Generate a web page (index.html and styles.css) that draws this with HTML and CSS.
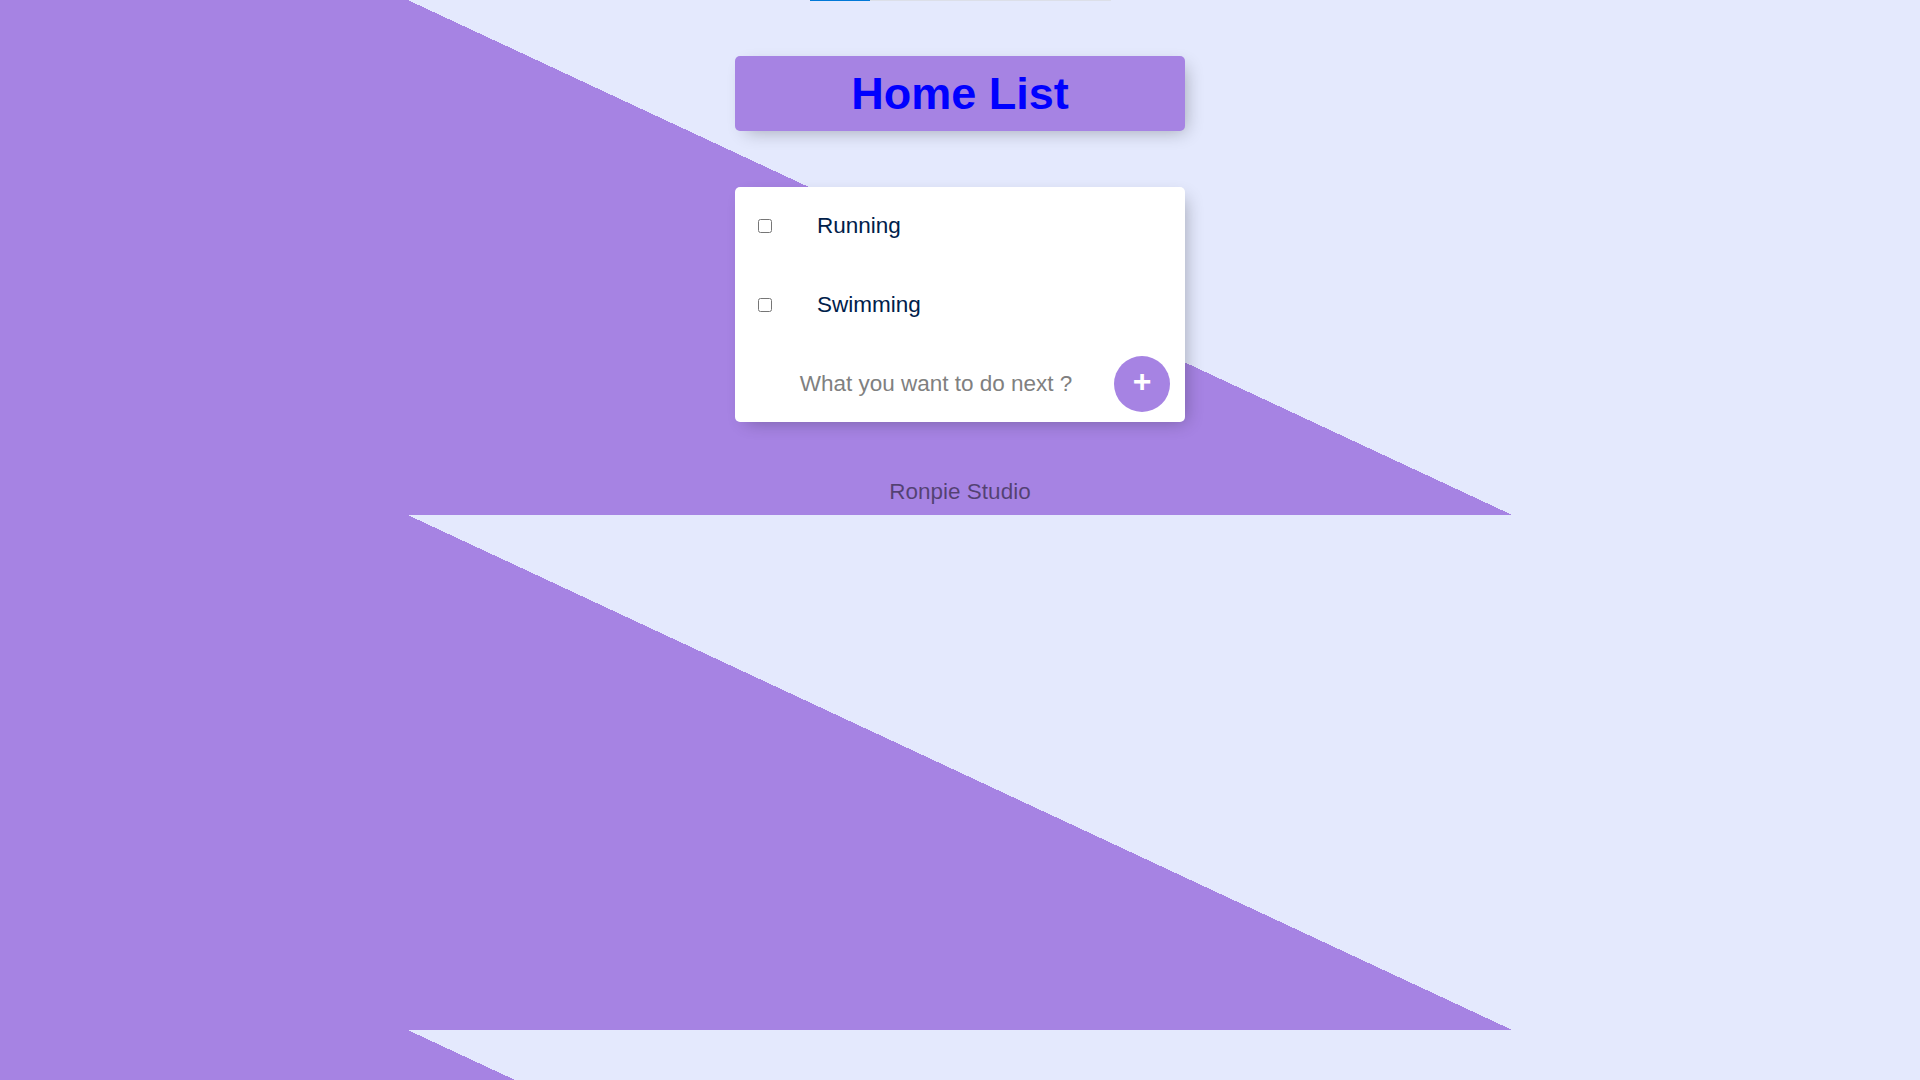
FILE: index.html
```html
<!DOCTYPE html>
<html lang="en">
<head>
<meta charset="utf-8">
<title>Home List</title>
<link rel="stylesheet" href="styles.css">
</head>
<body>
  <div class="topbar"><div class="topbar-fill"></div></div>
  <div class="box heading">
    <h1>Home List</h1>
  </div>
  <div class="box list">
    <div class="item">
      <input type="checkbox">
      <p>Running</p>
    </div>
    <div class="item">
      <input type="checkbox">
      <p>Swimming</p>
    </div>
    <form class="item add-form">
      <input class="new-item" type="text" name="newItem" placeholder="What you want to do next ?" autocomplete="off">
      <button class="add-btn" type="button">+</button>
    </form>
  </div>
  <footer class="footer">Ronpie Studio</footer>
</body>
</html>
```
FILE: styles.css
```css
html {
  background-color: #E4E9FD;
  background-image: linear-gradient(25deg, #A683E3 50%, #E4E9FD 50%);
  background-size: 100% 515px;
  min-height: 100%;
}

body {
  margin: 0;
  font-family: "Liberation Sans", Arial, Helvetica, sans-serif;
}

.topbar {
  width: 301px;
  height: 1px;
  margin: 0 auto;
  background: #dcdfe8;
}

.topbar-fill {
  width: 60px;
  height: 1px;
  background: #0078d7;
}

.box {
  width: 450px;
  margin: 0 auto;
  border-radius: 5px;
  box-shadow: 5.6px 5.6px 17px -5.6px rgba(0, 0, 0, 0.3);
}

.heading {
  margin-top: 55px;
  background-color: #A683E3;
  text-align: center;
}

.heading h1 {
  margin: 0;
  padding: 11px;
  font-size: 45px;
  line-height: 53px;
  font-weight: bold;
  color: #0000ff;
}

.list {
  margin-top: 56px;
  background: #ffffff;
}

.item {
  min-height: 78px;
  display: flex;
  align-items: center;
  border-bottom: 1px solid #ffffff;
}

.item:last-child {
  min-height: 77px;
  border-bottom: 0;
}

.item input[type="checkbox"] {
  width: 14px;
  height: 14px;
  margin: 0 23px;
}

.item p {
  margin: 0;
  padding: 22px;
  font-size: 22.5px;
  line-height: 26px;
  font-weight: 200;
  color: #00204a;
}

.add-form {
  margin: 0;
  padding-left: 51px;
}

.new-item {
  width: 300px;
  height: 60px;
  box-sizing: border-box;
  border: none;
  padding: 0;
  text-align: center;
  font-family: "Liberation Sans", Arial, Helvetica, sans-serif;
  font-size: 22.5px;
  color: #00204a;
  background: transparent;
}

.new-item::placeholder {
  color: grey;
  opacity: 1;
}

.new-item:focus {
  outline: none;
}

.add-btn {
  width: 56px;
  height: 56px;
  margin-left: 28px;
  border: 0;
  border-radius: 50%;
  background-color: #A683E3;
  color: #ffffff;
  font-family: "Liberation Sans", Arial, Helvetica, sans-serif;
  font-size: 32px;
  font-weight: bold;
  line-height: 1;
  padding: 0 0 5px;
  display: flex;
  align-items: center;
  justify-content: center;
}

.footer {
  margin-top: 57px;
  text-align: center;
  font-size: 22.5px;
  color: rgba(0, 0, 0, 0.5);
}
```
